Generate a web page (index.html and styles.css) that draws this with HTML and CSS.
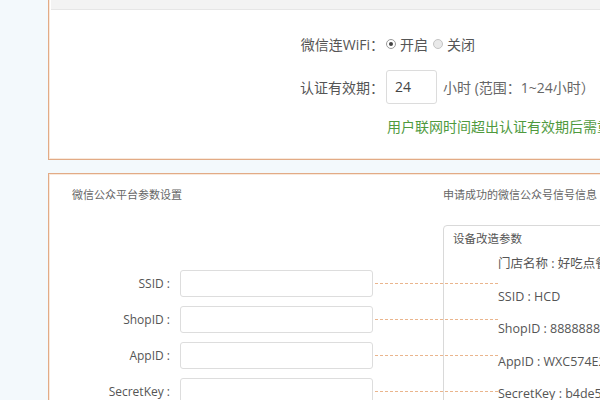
FILE: index.html
```html
<!DOCTYPE html>
<html lang="zh-CN">
<head>
<meta charset="utf-8">
<title>微信连WiFi设置</title>
<link rel="stylesheet" href="styles.css">
</head>
<body>
<div class="page">
  <section class="panel panel-top">
    <div class="panel-head"></div>
    <div class="top-body">
      <div class="frow row-wifi">
        <span class="flabel">微信连WiFi：</span>
        <label class="radio"><span class="dot on"></span>开启</label>
        <label class="radio"><span class="dot"></span>关闭</label>
      </div>
      <div class="frow row-valid">
        <span class="flabel">认证有效期：</span>
        <span class="num-box">24</span>
        <span class="unit">小时&nbsp;(范围：1~24小时）</span>
      </div>
      <div class="frow row-note">
        <span class="flabel"></span>
        <span class="note">用户联网时间超出认证有效期后需重新认证</span>
      </div>
    </div>
  </section>

  <section class="panel panel-params">
    <div class="col-left">
      <h3 class="ptitle">微信公众平台参数设置</h3>
      <div class="form">
        <div class="prow"><span class="plabel">SSID :</span><span class="pinput"></span><span class="link"></span></div>
        <div class="prow"><span class="plabel">ShopID :</span><span class="pinput"></span><span class="link"></span></div>
        <div class="prow"><span class="plabel">AppID :</span><span class="pinput"></span><span class="link"></span></div>
        <div class="prow"><span class="plabel">SecretKey :</span><span class="pinput"></span><span class="link"></span></div>
      </div>
    </div>
    <div class="col-right">
      <h3 class="ptitle">申请成功的微信公众号信号信息</h3>
      <div class="info-box">
        <div class="info-title">设备改造参数</div>
        <ul class="info-list">
          <li>门店名称 : 好吃点餐厅</li>
          <li>SSID : HCD</li>
          <li>ShopID : 8888888888</li>
          <li>AppID : WXC574E2A9</li>
          <li>SecretKey : b4de5c71a0</li>
        </ul>
      </div>
    </div>
  </section>
</div>
</body>
</html>
```

FILE: styles.css
```css
html, body {
  margin: 0;
  padding: 0;
}
body {
  background: #f3f9fc;
  overflow: hidden;
  width: 600px;
  height: 400px;
  font-family: "Open Sans", "Noto Sans CJK SC", sans-serif;
  color: #555;
}
.page {
  margin-top: -31px;
  padding-left: 48px;
}
.panel {
  width: 640px;
  background: #fff;
  border: 1px solid #e2ab86;
  box-shadow: inset 0 0 0 1px #f9e9dc;
}
.panel-head {
  height: 39px;
  margin: 0 2px;
  background: #f3f3f3;
  border-bottom: 1px solid #e6e6e6;
}
.top-body {
  height: 149px;
  padding-top: 22px;
  box-sizing: border-box;
  display: flex;
  flex-direction: column;
  font-size: 14px;
}
.frow {
  display: flex;
  align-items: center;
}
.flabel {
  flex: none;
  width: 335px;
  margin-right: 2px;
  text-align: right;
  white-space: nowrap;
  color: #555;
}
.row-wifi {
  height: 24px;
}
.radio {
  display: flex;
  align-items: center;
  margin-right: 5px;
  color: #555;
}
.dot {
  width: 8px;
  height: 8px;
  border-radius: 50%;
  border: 1px solid #c4c4c4;
  background: #e9e9e9;
  margin-right: 4px;
  position: relative;
}
.dot.on {
  background: #fff;
  border-color: #9a9a9a;
}
.dot.on::after {
  content: "";
  position: absolute;
  left: 2px;
  top: 2px;
  width: 4px;
  height: 4px;
  border-radius: 50%;
  background: #444;
}
.row-valid {
  margin-top: 14px;
  height: 34px;
}
.num-box {
  flex: none;
  box-sizing: border-box;
  width: 51px;
  height: 34px;
  border: 1px solid #dcdcdc;
  border-radius: 3px;
  padding-left: 8px;
  line-height: 32px;
  color: #444;
}
.unit {
  margin-left: 6px;
  white-space: nowrap;
  color: #666;
}
.row-note {
  margin-top: 12px;
  height: 20px;
}
.note {
  color: #4f9a3e;
  white-space: nowrap;
  margin-left: 1px;
}

.panel-params {
  margin-top: 13px;
  height: 260px;
  display: grid;
  grid-template-columns: 394px 1fr;
}
.ptitle {
  margin: 0;
  padding-top: 14px;
  font-size: 11px;
  line-height: 14px;
  font-weight: normal;
  color: #666;
  white-space: nowrap;
}
.col-left .ptitle {
  padding-left: 23px;
}
.form {
  margin-top: 68px;
  display: flex;
  flex-direction: column;
  gap: 9px;
}
.prow {
  display: flex;
  align-items: center;
  height: 27px;
}
.plabel {
  flex: none;
  width: 121px;
  text-align: right;
  font-size: 12px;
  color: #555;
  white-space: nowrap;
}
.pinput {
  flex: none;
  box-sizing: border-box;
  width: 193px;
  height: 27px;
  margin-left: 10px;
  border: 1px solid #dddddd;
  border-radius: 3px;
  background: #fff;
}
.link {
  flex: none;
  width: 124px;
  height: 1px;
  margin-left: 2px;
  background: repeating-linear-gradient(to right, #eab58d 0 3px, transparent 3px 5px);
  position: relative;
  z-index: 1;
}
.col-right {
  min-width: 0;
}
.info-box {
  margin-top: 23px;
  height: 220px;
  border: 1px solid #d9d9d9;
  border-radius: 4px;
  background: #fff;
  padding: 6px 0 0 9px;
}
.info-title {
  font-size: 11.5px;
  line-height: 14px;
  color: #555;
}
.info-list {
  list-style: none;
  margin: 2px 0 0;
  padding: 0 0 0 45px;
  font-size: 12.5px;
  color: #555;
}
.info-list li {
  line-height: 32.5px;
  white-space: nowrap;
}
```
